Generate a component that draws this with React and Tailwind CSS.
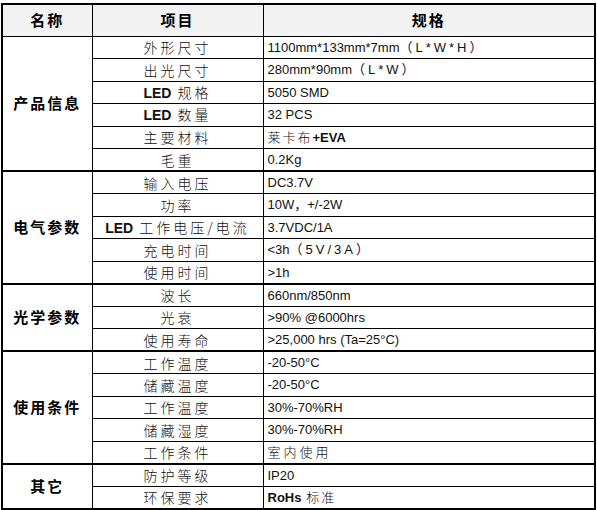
import React from "react";

const GROUPS = [
  {
    name: "产品信息",
    rows: [
      ["外形尺寸", "1100mm*133mm*7mm（L*W*H）"],
      ["出光尺寸", "280mm*90mm（L*W）"],
      [["LED", " 规格"], "5050 SMD"],
      [["LED", " 数量"], "32 PCS"],
      ["主要材料", ["莱卡布", "+EVA"]],
      ["毛重", "0.2Kg"],
    ],
  },
  {
    name: "电气参数",
    rows: [
      ["输入电压", "DC3.7V"],
      ["功率", "10W，+/-2W"],
      [["LED", " 工作电压/电流"], "3.7VDC/1A"],
      ["充电时间", "<3h（5V/3A）"],
      ["使用时间", ">1h"],
    ],
  },
  {
    name: "光学参数",
    rows: [
      ["波长", "660nm/850nm"],
      ["光衰", ">90% @6000hrs"],
      ["使用寿命", ">25,000 hrs (Ta=25°C)"],
    ],
  },
  {
    name: "使用条件",
    rows: [
      ["工作温度", "-20-50°C"],
      ["储藏温度", "-20-50°C"],
      ["工作温度", "30%-70%RH"],
      ["储藏湿度", "30%-70%RH"],
      ["工作条件", ["室内使用", ""]],
    ],
  },
  {
    name: "其它",
    rows: [
      ["防护等级", "IP20"],
      ["环保要求", ["RoHs", " 标准"]],
    ],
  },
];

const cjk = "font-['Noto_Sans_CJK_SC',sans-serif]";
const latin = "font-['Liberation_Sans','Noto_Sans_CJK_SC',sans-serif]";

const Item = ({ v }) => {
  if (Array.isArray(v)) {
    return (
      <span>
        <span className={`${latin} font-bold text-[14px] tracking-normal`}>{v[0]}</span>
        <span>{v[1]}</span>
      </span>
    );
  }
  return <span>{v}</span>;
};

const Value = ({ v }) => {
  if (Array.isArray(v)) {
    if (v[0] === "RoHs") {
      return (
        <span>
          <span className="font-bold">RoHs</span>
          <span className={`${cjk} font-light tracking-[2px]`}>{v[1]}</span>
        </span>
      );
    }
    if (v[0] === "莱卡布") {
      return (
        <span>
          <span className={`${cjk} font-light tracking-[2px]`}>莱卡布</span>
          <span className="font-bold">+EVA</span>
        </span>
      );
    }
    return <span className={`${cjk} font-light tracking-[3px]`}>{v[0]}</span>;
  }
  // fullwidth bracket part is set wider, as in the sheet
  const at = v.indexOf("（");
  if (at > 0) {
    return (
      <span>
        {v.slice(0, at)}
        <span className="tracking-[3px]">{v.slice(at)}</span>
      </span>
    );
  }
  return <span>{v}</span>;
};

export default function App() {
  return (
    <div className="w-[597px] h-[510px] bg-white pt-[3px] pl-[1px]">
      <table className="w-[595px] table-fixed border-collapse border-2 border-black text-black">
        <colgroup>
          <col className="w-[90px]" />
          <col className="w-[171px]" />
          <col />
        </colgroup>
        <thead>
          <tr className="h-[32px] bg-[#f2f2f2]">
            <th className={`${cjk} border border-black text-[15px] font-bold tracking-[2px]`}>名称</th>
            <th className={`${cjk} border border-black text-[15px] font-bold tracking-[2px]`}>项目</th>
            <th className={`${cjk} border border-black text-[15px] font-bold tracking-[2px]`}>规格</th>
          </tr>
        </thead>
        <tbody>
          {GROUPS.map((g) =>
            g.rows.map((r, i) => {
              const last = i === g.rows.length - 1;
              const rowBorder = last ? "border-b-2" : "border-b";
              return (
                <tr key={g.name + i} className="h-[22.5px]">
                  {i === 0 && (
                    <td
                      rowSpan={g.rows.length}
                      className={`${cjk} border-x border-b-2 border-black text-center text-[15px] font-bold tracking-[2px]`}
                    >
                      {g.name}
                    </td>
                  )}
                  <td className={`${cjk} border-x ${rowBorder} border-black text-center text-[14px] font-light leading-none tracking-[3px] text-[#111]`}>
                    <Item v={r[0]} />
                  </td>
                  <td className={`${latin} border-x ${rowBorder} border-black pl-[4px] text-[13px] leading-none text-[#111]`}>
                    <Value v={r[1]} />
                  </td>
                </tr>
              );
            })
          )}
        </tbody>
      </table>
    </div>
  );
}
